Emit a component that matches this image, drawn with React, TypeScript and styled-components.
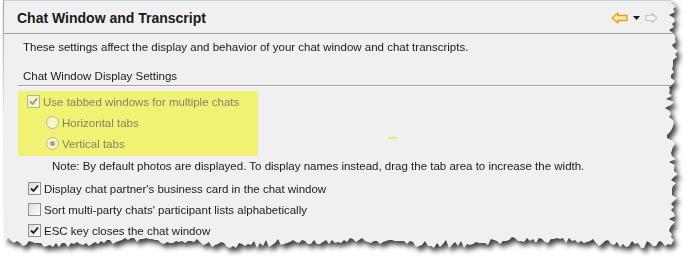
import * as React from 'react';
import styled, { createGlobalStyle } from 'styled-components';

const GlobalStyle = createGlobalStyle`
    html, body {
        margin: 0;
        padding: 0;
        background: #fff;
    }
    body {
        font-family: "Liberation Sans", Arial, sans-serif;
        font-size: 11.5px;
        color: #1a1a1a;
    }
`;

// torn paper edge, deterministic so every render is the same
function tornEdge(): string {
    let seed = 17;
    const rnd = () => {
        seed = (seed * 9301 + 49297) % 233280;
        return seed / 233280;
    };
    const pts: string[] = ['0px 0px'];
    for (let y = 0; y <= 244; y += 3) {
        const wave = Math.sin(y / 23) * 2;
        const x = 670 + Math.round(wave + (rnd() - 0.5) * 6 + (rnd() > 0.85 ? -3 : 0));
        pts.push(`${x}px ${y}px`);
    }
    for (let x = 668; x >= 0; x -= 3) {
        const wave = Math.sin(x / 31) * 2.5;
        const y = 243 + Math.round(wave + (rnd() - 0.5) * 6 + (rnd() > 0.85 ? -3 : 0));
        pts.push(`${x}px ${y}px`);
    }
    return `polygon(${pts.join(', ')})`;
}

const Page = styled.div`
    position: relative;
    width: 690px;
    height: 262px;
    overflow: hidden;
    background: #fff;
`;

const Shadow = styled.div`
    filter: drop-shadow(3px 4px 2.5px rgba(0, 0, 0, 0.75));
`;

const Sheet = styled.div<{ $clip: string }>`
    position: relative;
    margin-left: 3px;
    width: 684px;
    height: 256px;
    background: #f0f0f0;
    border-left: 1px solid #a0a0a0;
    border-top: 1px solid #c8d2dc;
    clip-path: ${p => p.$clip};
`;

const Header = styled.div`
    height: 32px;
    display: flex;
    align-items: center;
    justify-content: space-between;
    padding: 0 0 0 13px;
    border-bottom: 1px solid #a0a0a0;
`;

const Title = styled.h1`
    margin: 0;
    padding-top: 1px;
    font-size: 14px;
    font-weight: bold;
    color: #1a1a1a;
`;

const Nav = styled.div`
    display: flex;
    align-items: center;
    gap: 5px;
    margin-right: 30px;
    margin-top: 1px;
`;

const Body = styled.div`
    padding-left: 14px;
`;

const Description = styled.p`
    margin: 5px 0 0;
    padding-left: 5px;
    line-height: 16px;
`;

const SectionTitle = styled.div`
    margin-top: 13px;
    padding: 0 0 1px 5px;
    line-height: 16px;
    border-bottom: 1px solid #a0a0a0;
    box-shadow: 0 1px 0 #fff;
`;

const Highlight = styled.div`
    margin-top: 5px;
    width: 240px;
    padding: 0 0 2px 9px;
    box-sizing: border-box;
    background: #f1f173;
`;

const Row = styled.label<{ $indent?: number; $disabled?: boolean }>`
    display: flex;
    align-items: center;
    gap: 3px;
    height: 21px;
    padding-left: ${p => p.$indent || 0}px;
    color: ${p => (p.$disabled ? '#838368' : '#1a1a1a')};
`;

const Box = styled.span<{ $disabled?: boolean }>`
    display: inline-flex;
    align-items: center;
    justify-content: center;
    width: 11px;
    height: 11px;
    border: 1px solid ${p => (p.$disabled ? '#b4b49a' : '#8e8f8f')};
    background: ${p => (p.$disabled ? '#f4f4c8' : 'linear-gradient(135deg, #dcdcdc, #fff)')};
`;

const Radio = styled.span<{ $checked?: boolean }>`
    display: inline-flex;
    align-items: center;
    justify-content: center;
    width: 11px;
    height: 11px;
    border-radius: 50%;
    border: 1px solid #b4b49a;
    background: #f7f7c4;

    &::after {
        content: '';
        display: ${p => (p.$checked ? 'block' : 'none')};
        width: 5px;
        height: 5px;
        border-radius: 50%;
        background: #a4a48a;
    }
`;

const Note = styled.div`
    margin-top: 2px;
    padding-left: 34px;
    line-height: 16px;
`;

const Options = styled.div`
    margin-top: 4px;
    padding-left: 10px;
`;

const Speck = styled.span`
    position: absolute;
    left: 384px;
    top: 136px;
    width: 9px;
    height: 2px;
    background: #ecec6a;
`;

const Check = ({ disabled }: { disabled?: boolean }) => (
    <svg width="9" height="9" viewBox="0 0 9 9">
        <path d="M1 4.5 L3.5 7 L8 1.5" fill="none" stroke={disabled ? '#9a9a80' : '#1a1a1a'} strokeWidth="1.8" />
    </svg>
);

const CheckBox = ({ checked, disabled }: { checked?: boolean; disabled?: boolean }) => (
    <Box $disabled={disabled}>{checked && <Check disabled={disabled} />}</Box>
);

const BackArrow = () => (
    <svg width="17" height="12" viewBox="0 0 17 12">
        <path d="M1 6 L7 1 L7 3.5 L16 3.5 L16 8.5 L7 8.5 L7 11 Z" fill="#fde8a8" stroke="#e0a020" strokeWidth="1.4" strokeLinejoin="round" />
    </svg>
);

const ForwardArrow = () => (
    <svg width="13" height="12" viewBox="0 0 13 12">
        <path d="M12 6 L7 1.5 L7 3.5 L1 3.5 L1 8.5 L7 8.5 L7 10.5 Z" fill="#f4f4f4" stroke="#c4c4c4" strokeWidth="1.2" strokeLinejoin="round" />
    </svg>
);

const Caret = () => (
    <svg width="7" height="4" viewBox="0 0 7 4">
        <path d="M0 0 L7 0 L3.5 4 Z" fill="#1a1a1a" />
    </svg>
);

const settings = [
    { label: "Display chat partner's business card in the chat window", checked: true },
    { label: "Sort multi-party chats' participant lists alphabetically", checked: false },
    { label: 'ESC key closes the chat window', checked: true },
];

export default function App() {
    const clip = React.useMemo(() => tornEdge(), []);
    return (
        <Page>
            <GlobalStyle />
            <Shadow>
                <Sheet $clip={clip}>
                    <Header>
                        <Title>Chat Window and Transcript</Title>
                        <Nav>
                            <BackArrow />
                            <Caret />
                            <ForwardArrow />
                        </Nav>
                    </Header>
                    <Body>
                        <Description>These settings affect the display and behavior of your chat window and chat transcripts.</Description>
                        <SectionTitle>Chat Window Display Settings</SectionTitle>
                        <Highlight>
                            <Row $disabled>
                                <CheckBox checked disabled />
                                Use tabbed windows for multiple chats
                            </Row>
                            <Row $disabled $indent={19}>
                                <Radio />
                                Horizontal tabs
                            </Row>
                            <Row $disabled $indent={19}>
                                <Radio $checked />
                                Vertical tabs
                            </Row>
                        </Highlight>
                        <Note>Note: By default photos are displayed. To display names instead, drag the tab area to increase the width.</Note>
                        <Options>
                            {settings.map(s => (
                                <Row key={s.label}>
                                    <CheckBox checked={s.checked} />
                                    {s.label}
                                </Row>
                            ))}
                        </Options>
                    </Body>
                    <Speck />
                </Sheet>
            </Shadow>
        </Page>
    );
}
